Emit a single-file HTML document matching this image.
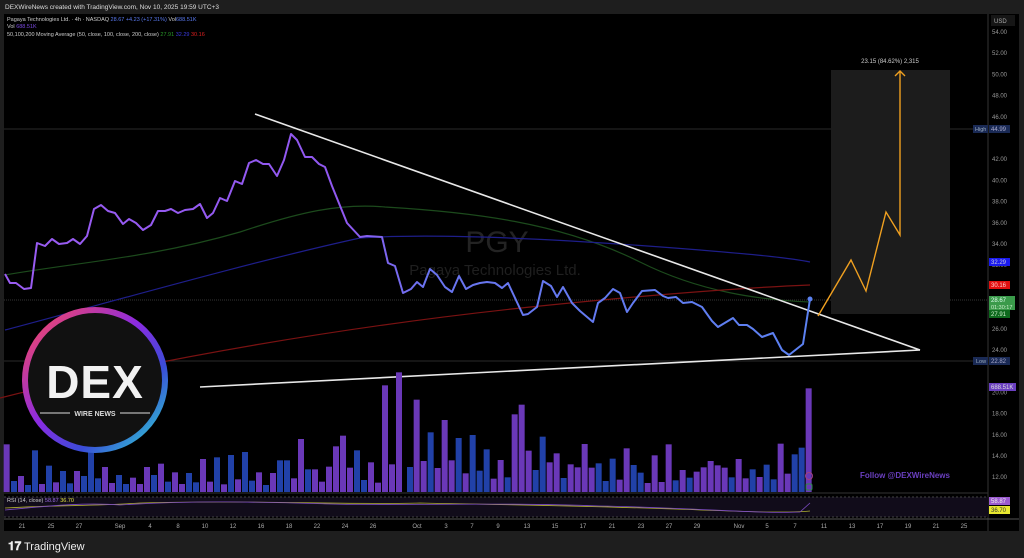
<!DOCTYPE html>
<html><head><meta charset="utf-8"><style>
body{margin:0;width:1024px;height:558px;background:#1e1e1e;overflow:hidden;font-family:"Liberation Sans",sans-serif}
svg{position:absolute;left:0;top:0}
</style></head><body>
<svg width="1024" height="558" viewBox="0 0 1024 558" font-family="Liberation Sans, sans-serif">
<defs>
<linearGradient id="pl" gradientUnits="userSpaceOnUse" x1="0" y1="0" x2="820" y2="0"><stop offset="0" stop-color="#9a5cf2"/><stop offset="0.42" stop-color="#9058f0"/><stop offset="0.52" stop-color="#6a74f0"/><stop offset="1" stop-color="#5b82f2"/></linearGradient>
<linearGradient id="ring" x1="0" y1="0" x2="1" y2="1"><stop offset="0" stop-color="#ff4a5a"/><stop offset="0.45" stop-color="#8a2be2"/><stop offset="0.7" stop-color="#3a4cd8"/><stop offset="1" stop-color="#2ee0d0"/></linearGradient>
</defs>
<rect x="0" y="0" width="1024" height="558" fill="#1e1e1e"/>
<text x="5" y="9" font-size="6.5" fill="#ddd">DEXWireNews created with TradingView.com, Nov 10, 2025 19:59 UTC+3</text>
<rect x="4" y="14" width="1015" height="517" fill="#000"/>
<line x1="988" y1="14" x2="988" y2="531" stroke="#333" stroke-width="1"/>
<rect x="991" y="15" width="24" height="11" fill="#161616"/>
<text x="994" y="23" font-size="6" fill="#aaa">USD</text>
<line x1="4" y1="129" x2="988" y2="129" stroke="#2a2a2a"/>
<line x1="4" y1="361" x2="988" y2="361" stroke="#2a2a2a"/>
<line x1="4" y1="300" x2="988" y2="300" stroke="#333" stroke-dasharray="1,1"/>
<rect x="831" y="70" width="119" height="244" fill="#1c1c1c"/>
<text x="890" y="63" font-size="6" fill="#ccc" text-anchor="middle">23.15 (84.62%) 2,315</text>
<text x="497" y="252" font-size="30" fill="#232323" text-anchor="middle">PGY</text>
<text x="495" y="275" font-size="15" fill="#1f1f1f" text-anchor="middle">Pagaya Technologies Ltd.</text>
<path d="M5,275 C80,262 150,258 240,232 C300,212 340,203 385,207 C470,212 560,222 640,262 C700,292 760,300 810,302" fill="none" stroke="#1c4a1c" stroke-width="1.2"/>
<path d="M5,330 C100,305 250,262 360,238 C450,232 600,242 700,250 C760,255 790,258 810,262" fill="none" stroke="#1e1e8a" stroke-width="1.2"/>
<path d="M0,398 C150,360 350,325 550,305 C680,292 760,287 810,285" fill="none" stroke="#7a1212" stroke-width="1.2"/>
<line x1="255" y1="114" x2="920" y2="350" stroke="#e8e8e8" stroke-width="1.6"/>
<line x1="200" y1="387" x2="920" y2="350" stroke="#e8e8e8" stroke-width="1.6"/>
<polyline fill="none" stroke="url(#pl)" stroke-width="2" stroke-linejoin="round" points="5,274 10,283 16,283 24,289 31,288 37,243 45,246 52,239 59,244 67,243 73,239 80,244 87,236 94,209 101,205 108,211 115,213 123,224 129,219 136,223 143,230 151,225 158,211 165,211 171,209 178,213 185,210 193,209 200,204 207,218 213,213 220,198 227,201 235,181 242,184 249,163 256,160 263,164 269,164 277,176 284,160 291,134 297,140 305,157 312,157 319,164 325,167 332,186 347,223 360,237 367,236 382,237 388,263 395,266 403,293 411,289 417,282 423,287 430,269 437,275 445,287 452,292 459,276 466,289 473,285 480,283 487,282 495,283 502,288 508,283 523,315 528,314 537,307 543,281 551,286 557,297 563,287 572,303 580,311 593,322 598,303 605,298 613,289 620,293 627,312 633,303 642,291 655,290 663,296 668,298 676,297 683,303 692,302 702,307 712,321 718,327 733,318 739,325 747,325 753,329 762,337 773,333 782,350 789,355 803,344 810,299"/>
<circle cx="810" cy="299" r="2.5" fill="#5b82f2"/>
<polyline fill="none" stroke="#f0a020" stroke-width="1.4" points="818,316 851,260 866,291 886,212 900,235 900,71"/>
<polyline fill="none" stroke="#f0a020" stroke-width="1.4" points="895,76 900,71 905,76"/>
<g id="vol"></g>
<circle cx="809" cy="476" r="3.5" fill="none" stroke="#a04080"/>
<rect x="806" y="484" width="6" height="6" rx="1.5" fill="none" stroke="#2a8a4a"/>
<text x="860" y="478" font-size="8" font-weight="bold" fill="#6a3fc0">Follow @DEXWireNews</text>
<line x1="4" y1="493" x2="988" y2="493" stroke="#333"/>
<rect x="4" y="497" width="984" height="20" fill="#110c1a"/>
<line x1="4" y1="497" x2="988" y2="497" stroke="#444" stroke-dasharray="2,2"/>
<line x1="4" y1="517" x2="988" y2="517" stroke="#444" stroke-dasharray="2,2"/>
<path d="M5,508 C60,505 100,506 140,503 C250,500 350,505 420,503 C520,505 600,506 700,510 C760,512 790,513 810,511" fill="none" stroke="#b0b030" stroke-width="0.8"/>
<path d="M5,510 C40,507 80,502 120,505 C200,500 260,502 330,504 C400,506 500,502 600,506 C700,508 760,514 800,512 L810,503" fill="none" stroke="#7a4ac0" stroke-width="0.8"/>
<text x="7" y="502" font-size="5.5" fill="#ccc">RSI (14, close) <tspan fill="#9a6ae0">58.87</tspan> <tspan fill="#e0e040">36.70</tspan></text>
<line x1="4" y1="519" x2="1019" y2="519" stroke="#555"/>
<g id="tax" font-size="6" fill="#aaa" text-anchor="middle"></g>
<g id="pax" font-size="6" fill="#999"></g>
<rect x="973" y="125" width="15" height="8" fill="#1a2a55"/><text x="975" y="131" font-size="5.5" fill="#9ab">High</text>
<rect x="989" y="125" width="21" height="8" fill="#1a2a55"/><text x="991" y="131" font-size="6" fill="#aac">44.99</text>
<rect x="973" y="357" width="15" height="8" fill="#1a2a55"/><text x="976" y="363" font-size="5.5" fill="#9ab">Low</text>
<rect x="989" y="357" width="21" height="8" fill="#1a2a55"/><text x="991" y="363" font-size="6" fill="#aac">22.82</text>
<rect x="989" y="258" width="21" height="8" fill="#1a1aee"/><text x="991" y="264" font-size="6" fill="#ccd">32.29</text>
<rect x="989" y="281" width="21" height="8" fill="#e01010"/><text x="991" y="287" font-size="6" fill="#fcc">30.16</text>
<rect x="989" y="296" width="26" height="14" fill="#3a9a4a"/><text x="991" y="302" font-size="6" fill="#dfe">28.67</text><text x="991" y="309" font-size="5.5" fill="#cec">01:30:17</text>
<rect x="989" y="310" width="21" height="8" fill="#0e6a1e"/><text x="991" y="316" font-size="6" fill="#cec">27.91</text>
<rect x="989" y="383" width="27" height="8" fill="#6a3fc0"/><text x="991" y="389" font-size="6" fill="#ddd">688.51K</text>
<rect x="989" y="497" width="21" height="8" fill="#9a5ad0"/><text x="991" y="503" font-size="6" fill="#eee">58.87</text>
<rect x="989" y="506" width="21" height="8" fill="#e8e830"/><text x="991" y="512" font-size="6" fill="#333">36.70</text>
<text x="7" y="21" font-size="5.5" fill="#ccc">Pagaya Technologies Ltd. · 4h · NASDAQ <tspan fill="#5a7af0">28.67 +4.23 (+17.31%)</tspan> Vol<tspan fill="#5a7af0">688.51K</tspan></text>
<text x="7" y="28" font-size="5.5" fill="#ccc">Vol <tspan fill="#7a4ae0">688.51K</tspan></text>
<text x="7" y="36" font-size="5.5" fill="#ccc">50,100,200 Moving Average (50, close, 100, close, 200, close) <tspan fill="#2a9a2a">27.91</tspan> <tspan fill="#3a3ae0">32.29</tspan> <tspan fill="#e02020">30.16</tspan></text>
<circle cx="95" cy="380" r="70" fill="#111"/>
<circle cx="95" cy="380" r="70" fill="none" stroke="url(#ring)" stroke-width="6"/>
<text x="95" y="398" font-size="46" font-weight="bold" fill="#f2f2f2" text-anchor="middle" letter-spacing="1">DEX</text>
<line x1="40" y1="413" x2="70" y2="413" stroke="#ddd" stroke-width="1"/>
<line x1="120" y1="413" x2="150" y2="413" stroke="#ddd" stroke-width="1"/>
<text x="95" y="416" font-size="7" font-weight="bold" fill="#ddd" text-anchor="middle">WIRE NEWS</text>
<text x="8" y="550" font-size="12" font-weight="bold" fill="#eee">𝟏𝟕</text>
<text x="24" y="550" font-size="11" fill="#eee">TradingView</text>
</svg>
<script>
var ns="http://www.w3.org/2000/svg";
function add(g,tag,at,txt){var e=document.createElementNS(ns,tag);for(var k in at)e.setAttribute(k,at[k]);if(txt)e.textContent=txt;g.appendChild(e);}
var v=document.getElementById('vol');
var a=[[20,238,0],[42,348,1],[63,333,0],[84,360,1],[105,256,1],[126,357,0],[147,302,1],[168,352,0],[189,318,1],[210,355,1],[231,318,0],[252,333,1],[273,223,1],[294,340,1],[315,306,0],[336,354,0],[357,330,1],[378,357,1],[399,338,0],[420,357,0],[441,306,0],[462,330,1],[483,296,0],[504,350,1],[525,322,0],[546,357,0],[567,324,1],[588,352,1],[609,282,0],[630,350,0],[651,277,1],[672,358,0],[693,270,1],[714,343,0],[735,261,1],[756,347,1],[777,322,0],[798,360,1],[819,324,0],[840,286,1],[861,286,1],[882,340,0],[903,222,0],[924,313,1],[945,313,0],[966,350,0],[987,305,0],[1008,244,0],[1029,212,0],[1050,308,0],[1071,256,1],[1092,345,1],[1113,292,0],[1134,353,0],[1155,61,0],[1176,298,0],[1197,22,0]];
a.forEach(function(b){var x=b[0]/3-3,y=365+b[1]/3;add(v,'rect',{x:x,y:y,width:6,height:492-y,fill:b[2]?'#2141a8':'#6a38b8'});});
var c=[[0,306,1],[20,104,0],[41,288,0],[62,202,1],[83,309,0],[104,165,0],[125,286,0],[146,219,1],[167,325,0],[188,210,1],[209,317,1],[230,253,1],[251,341,0],[272,285,0],[293,337,1],[314,148,0],[335,119,0],[356,257,0],[377,315,1],[398,215,1],[419,292,0],[440,265,0],[461,339,1],[482,298,0],[503,307,0],[524,237,0],[545,308,0],[566,295,1],[587,348,1],[608,281,1],[629,344,0],[650,250,0],[671,300,1],[692,323,1],[713,354,0],[734,271,0],[755,351,0],[776,238,0],[797,346,1],[818,315,0],[839,338,1],[860,320,0],[881,307,0],[902,288,0],[923,301,0],[944,308,0],[965,337,1],[986,282,0],[1007,340,0],[1028,313,1],[1049,336,0],[1070,299,1],[1091,343,1],[1112,236,0],[1133,326,0],[1154,268,1],[1175,248,1],[1196,70,0]];
c.forEach(function(b){var x=410+b[0]/3-3,y=365+b[1]/3;add(v,'rect',{x:x,y:y,width:6,height:492-y,fill:b[2]?'#2141a8':'#6a38b8'});});
var t=document.getElementById('tax');
[[22,'21'],[51,'25'],[79,'27'],[120,'Sep'],[150,'4'],[178,'8'],[205,'10'],[233,'12'],[261,'16'],[289,'18'],[317,'22'],[345,'24'],[373,'26'],[417,'Oct'],[446,'3'],[472,'7'],[498,'9'],[527,'13'],[555,'15'],[583,'17'],[612,'21'],[641,'23'],[669,'27'],[697,'29'],[739,'Nov'],[767,'5'],[795,'7'],[824,'11'],[852,'13'],[880,'17'],[908,'19'],[936,'21'],[964,'25']].forEach(function(l){add(t,'text',{x:l[0],y:528},l[1]);});
var p=document.getElementById('pax');
for(var q=54;q>=12;q-=2){var y=34+(54-q)*10.6;if([44,22].indexOf(q)>=0)continue;add(p,'text',{x:992,y:y},q.toFixed(2));}
</script>
</body></html>
